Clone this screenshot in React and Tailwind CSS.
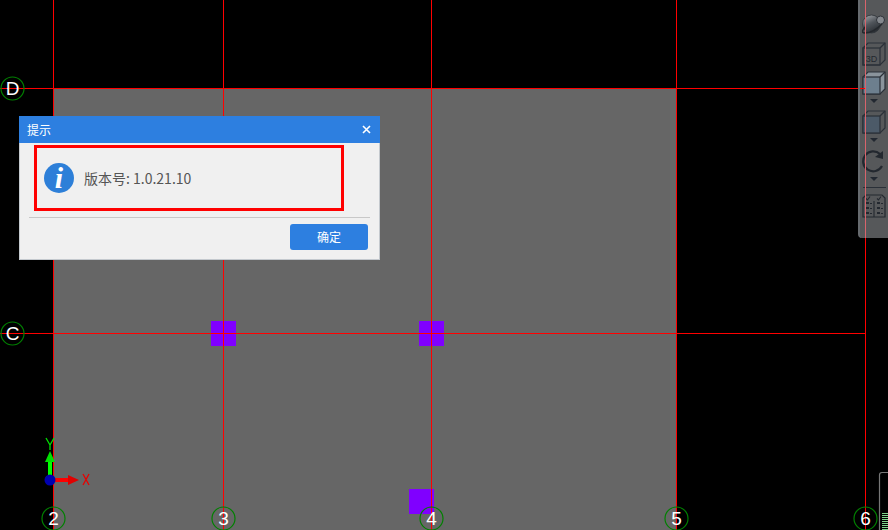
import React from 'react';

const cjk = '"Noto Sans CJK SC", "Liberation Sans", sans-serif';

const gridX = [53, 223, 431, 676, 865];
const gridY = [88, 333];
const columns = [
  { label: '2', x: 53 },
  { label: '3', x: 223 },
  { label: '4', x: 431 },
  { label: '5', x: 676 },
  { label: '6', x: 865 },
];
const rows = [
  { label: 'D', y: 88 },
  { label: 'C', y: 333 },
];
const posts = [
  { x: 211, y: 321 },
  { x: 419, y: 321 },
  { x: 409, y: 489 },
];

// axis bubble: green ring with a white label
const Bubble = ({ x, y, label }) => (
  <g>
    <circle cx={x + 0.5} cy={y + 0.5} r="11.5" fill="none" stroke="#008000" strokeWidth="1.2" />
    <text
      x={x + 0.5}
      y={y + 7}
      textAnchor="middle"
      fontSize="19"
      fill="#fff"
      fontFamily='"Liberation Sans", sans-serif'
    >
      {label}
    </text>
  </g>
);

// model space drawing
const Canvas = () => (
  <svg width="888" height="530" viewBox="0 0 888 530" className="block">
    <rect x="53" y="88" width="623" height="442" fill="#666666" />
    {posts.map((p) => (
      <rect key={`${p.x}-${p.y}`} x={p.x} y={p.y} width="25" height="25" fill="#8000ff" />
    ))}
    <g shapeRendering="crispEdges" stroke="#ff0000" strokeWidth="1">
      {gridX.map((x) => (
        <line key={x} x1={x + 0.5} y1="0" x2={x + 0.5} y2="530" />
      ))}
      {gridY.map((y) => (
        <line key={y} x1="0" y1={y + 0.5} x2="865" y2={y + 0.5} />
      ))}
    </g>
    {columns.map((c) => (
      <Bubble key={c.label} x={c.x} y={518} label={c.label} />
    ))}
    {rows.map((r) => (
      <Bubble key={r.label} x={12} y={r.y} label={r.label} />
    ))}

    {/* UCS icon */}
    <rect x="48" y="462" width="4" height="14" fill="#00ff00" />
    <polygon points="50,451 45,462 55,462" fill="#00e000" />
    <path d="M46 438 L50 445 L54 438 M50 445 L50 450" fill="none" stroke="#00e000" strokeWidth="1.3" />
    <rect x="54" y="478" width="15" height="4" fill="#ff0000" />
    <polygon points="79,480 68,475 68,485" fill="#e00000" />
    <path d="M83 474 L89 485 M89 474 L83 485" fill="none" stroke="#e80000" strokeWidth="1.3" />
    <circle cx="50" cy="480" r="5.5" fill="#0000b0" />

    {/* scrollbar stub */}
    <path d="M879.5 530 V475 Q879.5 472.5 882 472.5 H888" fill="none" stroke="#777" strokeWidth="1.2" />
    <g stroke="#7fd48a" strokeWidth="1" shapeRendering="crispEdges">
      {[513, 515, 517, 519, 521, 523, 525, 527, 529].map((y) => (
        <line key={y} x1="882" y1={y + 0.5} x2="888" y2={y + 0.5} />
      ))}
    </g>
  </svg>
);

const Caret = () => (
  <svg width="8" height="4" viewBox="0 0 8 4" className="block">
    <polygon points="0,0 8,0 4,4" fill="#222831" />
  </svg>
);

const PlanetIcon = () => (
  <svg width="24" height="24" viewBox="0 0 24 24" className="block">
    <defs>
      <linearGradient id="planet" x1="0.25" y1="0" x2="0.75" y2="1">
        <stop offset="0" stopColor="#9a9da1" />
        <stop offset="0.45" stopColor="#50555b" />
        <stop offset="1" stopColor="#24282d" />
      </linearGradient>
    </defs>
    <circle cx="9.5" cy="11" r="9" fill="url(#planet)" stroke="#2f3339" strokeWidth="0.8" />
    <path d="M3 14 Q-2 20 3 20 Q11 20 20 11" fill="none" stroke="#24282d" strokeWidth="1.6" />
    <circle cx="18.5" cy="7" r="4" fill="#85898e" stroke="#2f3339" strokeWidth="1" />
  </svg>
);

const CubeIcon = ({ children, face = 'none', side = 'none' }) => (
  <svg width="24" height="24" viewBox="0 0 24 24" className="block">
    <path d="M1 6 L6 1 H23 V18 L18 23 H1 Z" fill={side} stroke="#2a3038" strokeWidth="1.2" />
    <rect x="1" y="6" width="17" height="17" fill={face} stroke="#2a3038" strokeWidth="1.2" />
    <path d="M18 6 L23 1" stroke="#2a3038" strokeWidth="1.2" />
    {children}
  </svg>
);

const RotateIcon = () => (
  <svg width="24" height="24" viewBox="0 0 24 24" className="block">
    <path d="M18 4 A10 10 0 1 0 20 16" fill="none" stroke="#23282f" strokeWidth="2.2" />
    <polygon points="21,1 21,9 13,7" fill="#23282f" />
  </svg>
);

const ChecklistIcon = () => (
  <svg width="24" height="24" viewBox="0 0 24 24" className="block">
    <path d="M1 4 L4 1 H20 L23 4 V23 H1 Z" fill="none" stroke="#23282f" strokeWidth="1.2" />
    <path d="M12 7 V23 M4 4.5 L5.5 6 L8 2.5 M15 4.5 L16.5 6 L19 2.5" fill="none" stroke="#23282f" strokeWidth="1.1" />
    <g stroke="#23282f" fill="none" shapeRendering="crispEdges">
      <path d="M4 9 H7 M4 14 H7 M4 19 H7 M15 9 H18 M15 14 H18 M15 19 H18" strokeWidth="2" />
      <path d="M8 9 H10 M8 14 H10 M8 19 H10 M19 9 H21 M19 14 H21 M19 19 H21" strokeWidth="1" />
    </g>
  </svg>
);

const Toolbar = () => (
  <div className="absolute top-0 right-0 flex h-[238px] w-[30px] flex-col items-start rounded-bl-[4px] border-l-2 border-[#666a6e] bg-[#56585a] pt-[13px] pl-[2px]">
    <div className="flex w-[24px] flex-col items-center">
      <PlanetIcon />
      <div className="mt-[5px]">
        <CubeIcon>
          <text x="9.5" y="20" textAnchor="middle" fontSize="9" fill="#23282f" fontFamily='"Liberation Sans", sans-serif'>
            3D
          </text>
        </CubeIcon>
      </div>
      <div className="mt-[5px]">
        <CubeIcon face="#6d7f8e" side="#8a949c" />
      </div>
      <div className="mt-[4px]">
        <Caret />
      </div>
      <div className="mt-[7px]">
        <CubeIcon face="#4c5a68" />
      </div>
      <div className="mt-[4px]">
        <Caret />
      </div>
      <div className="mt-[8px]">
        <RotateIcon />
      </div>
      <div className="mt-[3px]">
        <Caret />
      </div>
      <div className="mt-[6px] h-px w-[23px] bg-[#2a3038]" />
      <div className="mt-[6px]">
        <ChecklistIcon />
      </div>
    </div>
    {/* grid line seen through the panel */}
    <div className="absolute top-0 left-[5px] h-full w-px bg-[#d8646c]" />
    <div className="absolute top-[88px] left-0 h-px w-[5px] bg-[#ff0000]" />
  </div>
);

const Dialog = () => (
  <div className="absolute top-[116px] left-[19px] flex h-[144px] w-[361px] flex-col" style={{ fontFamily: cjk }}>
    <div className="flex h-[27px] shrink-0 items-center justify-between bg-[#2d7fe0] pr-[9px] pl-[8px] text-[12px] text-white">
      <span>提示</span>
      <svg width="9" height="9" viewBox="0 0 9 9" className="block">
        <path d="M1 1 L8 8 M8 1 L1 8" stroke="#fff" strokeWidth="1.6" />
      </svg>
    </div>
    <div className="flex flex-1 flex-col border-x border-b border-[#c4c9ce] bg-[#f0f0f0]">
      <div className="mt-[2px] ml-[14px] flex h-[66px] w-[310px] items-center border-[3px] border-[#ff0000] pl-[7px]">
        <div className="flex h-[30px] w-[30px] items-center justify-center rounded-full bg-[#2d7fd8]">
          <span
            className="text-[30px] leading-none font-bold text-white italic"
            style={{ fontFamily: '"Liberation Serif", serif' }}
          >
            i
          </span>
        </div>
        <span className="ml-[10px] text-[14px] text-[#555555]">版本号: 1.0.21.10</span>
      </div>
      <div className="mx-[9px] mt-[6px] h-px bg-[#c8c8c8]" />
      <div className="mt-[6px] flex justify-end pr-[11px]">
        <button className="flex h-[26px] w-[78px] items-center justify-center rounded-[3px] bg-[#2d7fe0] text-[12px] text-white">
          确定
        </button>
      </div>
    </div>
  </div>
);

export default function App() {
  return (
    <div className="relative h-[530px] w-[888px] overflow-hidden bg-black">
      <Canvas />
      <Toolbar />
      <Dialog />
    </div>
  );
}
